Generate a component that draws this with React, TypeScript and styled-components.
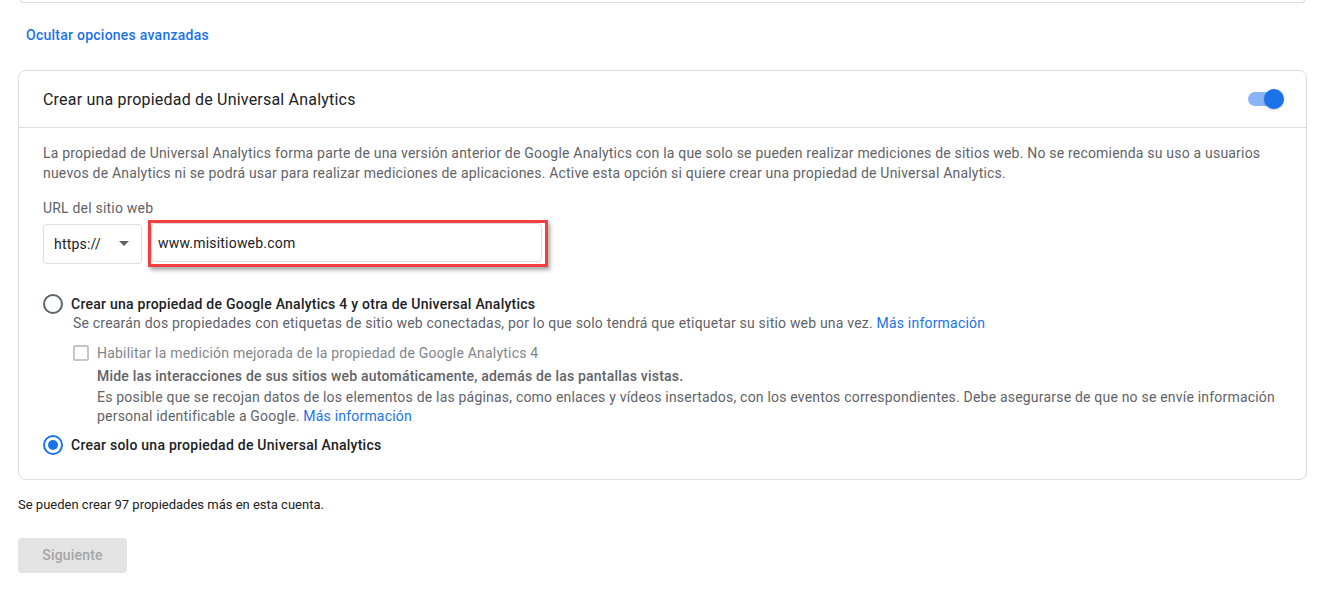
import React, { useState } from 'react'
import styled, { createGlobalStyle } from 'styled-components'

const Global = createGlobalStyle`
  body {
    margin: 0;
    background: #fff;
    font-family: Roboto, "Liberation Sans", Arial, sans-serif;
    color: #202124;
  }
`

const Page = styled.div`
  padding: 0 32px 0 18px;
`

const PrevCard = styled.div`
  height: 2px;
  margin: 0 2px;
  border: 1px solid #dadce0;
  border-top: none;
  border-radius: 0 0 8px 8px;
`

const LinkButton = styled.a`
  display: block;
  margin: 22px 0 0 8px;
  font-size: 14px;
  line-height: 20px;
  font-weight: 500;
  color: #1a73e8;
  text-decoration: none;
  letter-spacing: 0.25px;
`

const Card = styled.div`
  margin-top: 25px;
  border: 1px solid #dadce0;
  border-radius: 8px;
`

const CardHeader = styled.div`
  display: flex;
  align-items: center;
  justify-content: space-between;
  height: 56px;
  padding: 0 24px 0 24px;
  border-bottom: 1px solid #dadce0;
`

const Title = styled.div`
  font-size: 16px;
  letter-spacing: 0.2px;
  color: #202124;
`

const Track = styled.div`
  position: relative;
  width: 34px;
  height: 14px;
  border-radius: 7px;
  background: ${p => (p.$on ? '#8ab4f8' : '#bdc1c6')};
  cursor: pointer;
`

const Thumb = styled.span`
  position: absolute;
  top: -3px;
  left: ${p => (p.$on ? '16px' : '-2px')};
  width: 20px;
  height: 20px;
  border-radius: 50%;
  background: ${p => (p.$on ? '#1a73e8' : '#fff')};
  box-shadow: 0 1px 2px rgba(0, 0, 0, 0.25);
`

const CardBody = styled.div`
  padding: 16px 24px 24px 24px;
`

const Paragraph = styled.p`
  margin: 0;
  font-size: 14px;
  line-height: 19.5px;
  letter-spacing: 0.2px;
  color: #5f6368;
`

const FieldLabel = styled.div`
  margin-top: 16px;
  font-size: 14px;
  line-height: 18px;
  letter-spacing: 0.2px;
  color: #5f6368;
`

const UrlRow = styled.div`
  display: flex;
  align-items: center;
  gap: 6px;
  margin-top: 3px;
`

const Select = styled.div`
  box-sizing: border-box;
  display: flex;
  align-items: center;
  justify-content: space-between;
  width: 99px;
  height: 40px;
  padding: 0 12px 0 10px;
  border: 1px solid #dadce0;
  border-radius: 4px;
  font-size: 14px;
  letter-spacing: 0.2px;
  color: #202124;
`

const Caret = styled.span`
  width: 0;
  height: 0;
  border-left: 5px solid transparent;
  border-right: 5px solid transparent;
  border-top: 5px solid #5f6368;
`

const Highlight = styled.div`
  display: flex;
  padding: 0 3px 2px 0;
  border: 3px solid #f23f42;
  box-shadow: 2px 3px 4px rgba(0, 0, 0, 0.35);
`

const TextInput = styled.input`
  box-sizing: border-box;
  width: 391px;
  height: 39px;
  padding: 0 6px;
  border: 1px solid #dadce0;
  border-radius: 4px;
  font-family: inherit;
  font-size: 14px;
  letter-spacing: 0.2px;
  color: #202124;
  outline: none;
`

const Options = styled.div`
  margin-top: 27px;
`

const RadioRow = styled.label`
  display: flex;
  align-items: center;
  gap: 8px;
  margin-top: ${p => p.$top || 0}px;
  cursor: pointer;
`

const RadioCircle = styled.span`
  box-sizing: border-box;
  position: relative;
  flex: none;
  width: 20px;
  height: 20px;
  border-radius: 50%;
  border: 2px solid ${p => (p.$checked ? '#1a73e8' : '#5f6368')};
  &::after {
    content: '';
    display: ${p => (p.$checked ? 'block' : 'none')};
    position: absolute;
    top: 3px;
    left: 3px;
    width: 10px;
    height: 10px;
    border-radius: 50%;
    background: #1a73e8;
  }
`

const RadioText = styled.span`
  font-size: 14px;
  line-height: 20px;
  font-weight: 500;
  letter-spacing: 0.25px;
  color: #202124;
`

const Indented = styled.div`
  padding-left: 30px;
`

const Help = styled.div`
  font-size: 14px;
  line-height: 19.5px;
  letter-spacing: 0.2px;
  color: #5f6368;
  margin-top: ${p => p.$top || 0}px;
`

const Link = styled.a`
  color: #1a73e8;
  text-decoration: none;
`

const CheckRow = styled.div`
  display: flex;
  align-items: center;
  gap: 8px;
  margin-top: 9px;
`

const CheckBox = styled.span`
  box-sizing: border-box;
  flex: none;
  width: 16px;
  height: 16px;
  border: 2px solid #c6c6c6;
  border-radius: 2px;
`

const CheckText = styled.span`
  font-size: 14px;
  line-height: 20px;
  letter-spacing: 0.2px;
  color: #80868b;
`

const CheckDetails = styled.div`
  padding-left: 24px;
  margin-top: 3px;
`

const Strong = styled.div`
  font-size: 14px;
  line-height: 20px;
  font-weight: 500;
  letter-spacing: 0.2px;
  color: #5f6368;
`

const Note = styled.div`
  margin-top: 17px;
  font-size: 13px;
  line-height: 16px;
  color: #202124;
`

const NextButton = styled.button`
  display: block;
  margin-top: 25px;
  width: 109px;
  height: 35px;
  border: none;
  border-radius: 4px;
  background: #e3e3e3;
  font-family: inherit;
  font-size: 14px;
  font-weight: 500;
  letter-spacing: 0.2px;
  color: #a6a6a6;
`

const App = () => {
  const [on, setOn] = useState(true)
  const [choice, setChoice] = useState('ua')
  const [url, setUrl] = useState('www.misitioweb.com')

  return (
    <Page>
      <Global />
      <PrevCard />
      <LinkButton href="#">Ocultar opciones avanzadas</LinkButton>

      <Card>
        <CardHeader>
          <Title>Crear una propiedad de Universal Analytics</Title>
          <Track $on={on} onClick={() => setOn(!on)}>
            <Thumb $on={on} />
          </Track>
        </CardHeader>

        <CardBody>
          <Paragraph>
            La propiedad de Universal Analytics forma parte de una versión anterior de Google Analytics con la que solo se pueden realizar mediciones de sitios web. No se recomienda su uso a usuarios nuevos de Analytics ni se podrá usar para realizar mediciones de aplicaciones. Active esta opción si quiere crear una propiedad de Universal Analytics.
          </Paragraph>

          <FieldLabel>URL del sitio web</FieldLabel>
          <UrlRow>
            <Select>
              https://
              <Caret />
            </Select>
            <Highlight>
              <TextInput value={url} onChange={e => setUrl(e.target.value)} />
            </Highlight>
          </UrlRow>

          <Options>
            <RadioRow onClick={() => setChoice('both')}>
              <RadioCircle $checked={choice === 'both'} />
              <RadioText>Crear una propiedad de Google Analytics 4 y otra de Universal Analytics</RadioText>
            </RadioRow>
            <Indented>
              <Help>
                Se crearán dos propiedades con etiquetas de sitio web conectadas, por lo que solo tendrá que etiquetar su sitio web una vez. <Link href="#">Más información</Link>
              </Help>
              <CheckRow>
                <CheckBox />
                <CheckText>Habilitar la medición mejorada de la propiedad de Google Analytics 4</CheckText>
              </CheckRow>
              <CheckDetails>
                <Strong>Mide las interacciones de sus sitios web automáticamente, además de las pantallas vistas.</Strong>
                <Help $top={2}>
                  Es posible que se recojan datos de los elementos de las páginas, como enlaces y vídeos insertados, con los eventos correspondientes. Debe asegurarse de que no se envíe información personal identificable a Google. <Link href="#">Más información</Link>
                </Help>
              </CheckDetails>
            </Indented>
            <RadioRow $top={8} onClick={() => setChoice('ua')}>
              <RadioCircle $checked={choice === 'ua'} />
              <RadioText>Crear solo una propiedad de Universal Analytics</RadioText>
            </RadioRow>
          </Options>
        </CardBody>
      </Card>

      <Note>Se pueden crear 97 propiedades más en esta cuenta.</Note>
      <NextButton disabled>Siguiente</NextButton>
    </Page>
  )
}

export default App
